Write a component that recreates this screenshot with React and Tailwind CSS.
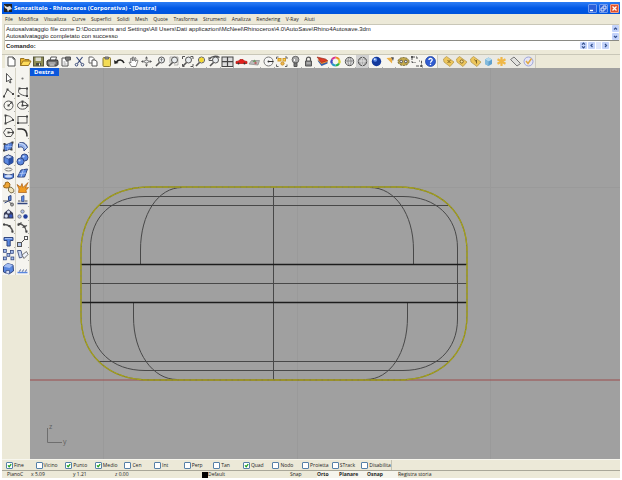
import React from "react";

const K = "#555555";

function Icon({ children }) {
  return (
    <svg viewBox="0.5 0.5 13 13" className="block size-[13px] shrink-0" fill="none" stroke={K} strokeWidth="1">
      {children}
    </svg>
  );
}

function Lens({ children }) {
  return (
    <>
      <circle cx="8" cy="5.5" r="3" fill="#e8ecee" />
      <path d="M6 8 2.5 11.5" strokeWidth="1.6" />
      {children}
    </>
  );
}

const corner = <path d="M12.5 13.5 13.5 12.5" stroke="#999" strokeWidth=".8" />;
const tag = <path d="M2 4.5 5 2 12.500 7.500 8.500 12 2.500 7.500Z" fill="#edc65c" stroke="#b89a50" strokeWidth=".8" />;

const mainTools = [
  ["Nuovo", <path d="M3.500 2.500H8.500L10.500 4.500V11.500H3.500ZM8.500 2.500V4.500H10.500" fill="#fff" />],
  ["Apri", <><path d="M2 11V4H5.500L6.500 5H10.500V7" fill="#e9b32c" stroke="#9a7420" /><path d="M2 11 4.500 6.500H12.500L10 11Z" fill="#ffdc5a" stroke="#9a7420" /></>],
  ["Salva", <><rect x="2" y="2.500" width="10" height="9" fill="#8d8c55" stroke="#55543a" /><path d="M4 3H9.500V6.500H4Z" fill="#dcdcd2" stroke="none" /><path d="M4.500 8.500H9.500V11H4.500Z" fill="#4b4b40" stroke="none" /><path d="M8 9V11" stroke="#fff" /></>],
  ["Stampa", <><path d="M4.500 6 5.500 2.500H11L10 6" fill="#fff" /><path d="M1.500 6.500 3 5.500H12L12.500 7V10L11 11.500H2.500L1.500 10Z" fill="#6c6c6c" stroke="#333" /><path d="M3 8.500H10" stroke="#ddd" /><path d="M4 10.500H9" stroke="#fff" /></>],
  ["Proprietà", <><path d="M3.500 3.500H9.500V11.500H3.500Z" fill="#fff" /><path d="M7 2.500H12V5.500H10L8.500 7 7 5Z" fill="#777" /><path d="M5 7.500H7M5 9.500H8" stroke="#999" /></>],
  ["Taglia", <><path d="M4 2.500 9 9M10 2.500 5 9" stroke="#394a7a" strokeWidth="1.200" /><circle cx="4" cy="10.200" r="1.300" stroke="#394a7a" /><circle cx="10" cy="10.200" r="1.300" stroke="#394a7a" /></>],
  ["Copia", <><path d="M3.500 2.500H7L8.500 4V8.500H3.500Z" fill="#fff" stroke="#666" /><path d="M6.500 5.500H9.500L11.500 7V11.500H6.500Z" fill="#fff" stroke="#555" /></>],
  ["Incolla", <><rect x="3.500" y="3" width="7.500" height="9" rx="1" fill="#f3dc55" stroke="#8b7a33" /><path d="M5.500 2.500H9V4.500H5.500Z" fill="#999" stroke="#666" /></>],
  ["Annulla", <><path d="M4 7.500C6 4.500 10 5 11.500 8.500" strokeWidth="1.600" stroke="#222" /><path d="M1.500 5.500 2 9.500 6 8.500Z" fill="#222" stroke="none" />{corner}</>],
  ["Panoramica", <path d="M5 12 2.500 8 3.500 7.500 4.500 8.500 4 4 5 3.500 6 6.500V2.500H7.200L7.500 6.500 8.500 3 9.500 3.500 9 7 10.500 5.500 11.500 6 9.500 12Z" fill="#fff" stroke="#666" strokeWidth=".8" />],
  ["Ruota vista", <><path d="M7 3V12M2 7H12" stroke="#999" strokeWidth=".8" /><path d="M5.500 4 7 1.800 8.500 4ZM5.500 10 7 12.200 8.500 10ZM3.800 5.500 1.500 7 3.800 8.500ZM10.200 5.500 12.500 7 10.200 8.500Z" fill="#555" stroke="none" /><ellipse cx="7" cy="7" rx="2.200" ry="1.500" fill="#eee" strokeWidth=".8" />{corner}</>],
  ["Zoom dinamico", <Lens><path d="M8 4V7M7 5 8 4 9 5" strokeWidth=".7" /></Lens>],
  ["Zoom finestra", <><Lens /><path d="M3.500 8V2.500H11.500V10.500H7" strokeDasharray="1 1" stroke="#777" />{corner}</>],
  ["Zoom estensioni", <><Lens /><path d="M2 4.500V2H4.500M10 2H12.500V4.500M12.500 9.500V12H10M4 12H2V9.500" />{corner}</>],
  ["Zoom selezione", <><Lens /><circle cx="8" cy="5.500" r="2.400" fill="#f4d82f" stroke="none" />{corner}</>],
  ["Vista precedente", <><Lens /><path d="M2 4.500C4 1.500 9 1 12 3" strokeWidth="1.500" /><path d="M1.500 2.500V6H5" />{corner}</>],
  ["Quattro viste", <><rect x="1.500" y="2.500" width="11" height="9.500" fill="#ddd" stroke="#444" /><path d="M7 2.500V12M1.500 7.200H12.500" stroke="#444" strokeWidth="1.200" />{corner}</>],
  ["Vista destra", <><path d="M1.500 9V7L4 6.500 5.500 5H8.500L10 6.500 12.500 7V9Z" fill="#e3211d" stroke="#b01613" strokeWidth=".7" /><circle cx="4" cy="9" r="1" fill="#333" stroke="none" /><circle cx="10" cy="9" r="1" fill="#333" stroke="none" /></>],
  ["Piano di costruzione", <><path d="M1.500 9.500 4 6H12L10.500 10.500Z" fill="#bbb" stroke="#888" strokeWidth=".7" /><path d="M5 7.500 7 5 9 7.500Z" fill="#6c9b67" stroke="none" /><circle cx="8" cy="8.500" r="1.200" fill="#b66" stroke="none" />{corner}</>],
  ["Centro vista", <><circle cx="7" cy="7" r="4.500" fill="#f6f6f6" stroke="#777" /><path d="M7 7H12" stroke="#333" /><circle cx="7" cy="7" r="1" fill="#333" stroke="none" />{corner}</>],
  ["Seleziona", <><path d="M2 4.500V2.500H4M10.500 2.500H12.500V4.500M12.500 10V12H10.500M4 12H2V10" stroke="#666" /><rect x="3.500" y="4" width="3" height="2.500" fill="#f5c93b" stroke="#d39a2b" /><rect x="8.500" y="4" width="2.500" height="2.500" fill="#f7d75a" stroke="#d39a2b" /><circle cx="8" cy="9" r="1.600" fill="#f2b94a" stroke="#c98f2c" /></>],
  ["Nascondi", <><circle cx="7" cy="5.200" r="3.400" fill="#aaa" stroke="#666" /><path d="M5.500 8.500H8.500V12H5.500Z" fill="#777" stroke="#555" /><path d="M6 4.500V6.500" stroke="#fff" />{corner}</>],
  ["Blocca", <><path d="M5 6.500V4.500C5 2 9 2 9 4.500V6.500" strokeWidth="1.200" /><path d="M4 6.500H10V11.500H4Z" fill="#888" /><path d="M5 8.500H9" stroke="#ccc" />{corner}</>],
  ["Livelli", <><path d="M2 6 6 11.500 12 9V6Z" fill="#355ea8" stroke="none" /><path d="M2 5 6 9.500 12 7.500V5.500Z" fill="#f48b30" stroke="none" /><path d="M1.500 2.500 10 4.500 12 6 6 8Z" fill="#dd3b25" stroke="#8c2418" strokeWidth=".6" />{corner}</>],
  ["Proprietà colore", <g strokeWidth="2.200"><path d="M7 3A4 4 0 0 1 10.500 5" stroke="#ef8b22" /><path d="M10.500 5A4 4 0 0 1 10.500 9" stroke="#d5cf2b" /><path d="M10.500 9A4 4 0 0 1 7 11" stroke="#29b14a" /><path d="M7 11A4 4 0 0 1 3.500 9" stroke="#2599c8" /><path d="M3.500 9A4 4 0 0 1 3.500 5" stroke="#4149c3" /><path d="M3.500 5A4 4 0 0 1 7 3" stroke="#d93191" /></g>],
  ["Wireframe", <><circle cx="7" cy="7" r="4.200" fill="#ddd" stroke="#555" /><path d="M7 3C5 5 5 9 7 11M7 3C9 5 9 9 7 11M3 6.500H11" stroke="#777" strokeWidth=".8" />{corner}</>],
  ["Ombreggia", <><rect x="0.500" y="0.500" width="13" height="13" fill="#d0d0d0" stroke="none" /><circle cx="7" cy="7" r="4.200" fill="#aaa" stroke="#555" /><path d="M7 3C5 5 5 9 7 11M7 3C9 5 9 9 7 11M3 6.500H11" stroke="#eee" strokeWidth=".8" />{corner}</>],
  ["Renderizza", <><circle cx="7" cy="7" r="4.700" fill="#12389c" stroke="none" /><circle cx="5.700" cy="5.300" r="2" fill="#5f8ee8" stroke="none" /><circle cx="5.300" cy="4.800" r=".8" fill="#fff" stroke="none" />{corner}</>],
  ["Faretto", <><path d="M4 3.500 10 3 9.500 9Z" fill="#ecae43" stroke="none" /><path d="M8.500 2.500 11.500 3 10.500 6.500Z" fill="#555" stroke="none" />{corner}</>],
  ["Opzioni", <><ellipse cx="7" cy="7" rx="5.500" ry="4" fill="#c4a94a" stroke="#6d6030" strokeDasharray="2 1" /><circle cx="4.700" cy="7" r="1.300" fill="#eee" /><circle cx="9.300" cy="7" r="1.300" fill="#eee" /></>],
  ["Quota", <><path d="M2.500 2.500V8H6M2.500 2.500H7.500V5M6.500 11.500H12V6.500H9.500" stroke="#555" strokeDasharray="3 1" /><path d="M1.500 1.500H3.500V3.500H1.500ZM11 10.500H13V12.500H11Z" fill="#555" stroke="none" />{corner}</>],
  ["Guida", <><circle cx="7" cy="7" r="5" fill="#2f5cd2" stroke="#173a96" strokeWidth=".7" /><path d="M5.300 5.500C5.500 3.500 8.800 3.500 8.700 5.500 8.600 6.700 7 6.700 7 8.200M7 9.200V10.400" stroke="#fff" strokeWidth="1.300" /></>],
];

const renderTools = [
  ["Materiali", <>{tag}<path d="M6 5.500 9 8.500M9 5.500 6 8.500" stroke="#806626" /></>],
  ["Luci", <>{tag}<circle cx="7.200" cy="7" r="1.600" stroke="#806626" fill="#f6e2a0" /></>],
  ["Camera", <>{tag}<path d="M6 5 8 7.500M8 5.500V9" stroke="#806626" /></>],
  ["Cubo", <><path d="M3.500 5 7 3 10.500 5V9.500L7 11.500 3.500 9.500Z" fill="#5e9fce" stroke="none" /><path d="M3.500 5 7 3 10.500 5 7 7Z" fill="#b4daef" stroke="none" /><path d="M7 7V11.500L3.500 9.500V5Z" fill="#83bbdd" stroke="none" /></>],
  ["Sole", <path d="M7 2.500V11.500M3 4.800 11 9.200M11 4.800 3 9.200" stroke="#f0b848" strokeWidth="2.200" />],
  ["Piano infinito", <path d="M2 5 5.500 2.500 12 9 8.500 11.500Z" fill="#e1e1df" stroke="#777" />],
  ["Conferma", <><circle cx="7" cy="7" r="4.500" fill="#e5e5f7" stroke="#9da4d8" /><path d="M4.500 6.500 6.500 9 10 4" stroke="#e0a944" strokeWidth="1.500" /></>],
];

const B = "#5a88e0";
const N = "#33477f";
function Dots({ at }) {
  return at.map(([x, y]) => <rect key={x + "-" + y} x={x - 1} y={y - 1} width="2" height="2" fill="#444" stroke="none" />);
}

const leftTools = [
  ["Seleziona oggetti", <path d="M5 2V10.500L7 8.500 8.500 11.500 9.500 11 8.300 8H10.500Z" fill="#fff" stroke="#444" strokeWidth=".9" />],
  ["Polilinea", <><path d="M2.500 11 6 4 11.500 8.500" /><Dots at={[[2.500, 11], [6, 4], [11.500, 8.500]]} />{corner}</>],
  ["Cerchio", <><circle cx="7" cy="7" r="4.500" /><path d="M7 7 10 4" /><Dots at={[[7, 7], [10, 4]]} />{corner}</>],
  ["Arco", <><path d="M4 3V11M4 3C8 3 11 5 11.500 7.500L4 11" /><Dots at={[[4, 3], [4, 11], [11.500, 7.500]]} />{corner}</>],
  ["Poligono", <><path d="M4.500 3H9.500L12 7 9.500 11H4.500L2 7Z" /><path d="M7 7H11.500" /><Dots at={[[7, 7], [11.500, 7]]} />{corner}</>],
  ["Superficie da punti", <><path d="M3 4.500C6 6 8 3 11 3L10 10C7 9 5 12 2.500 11Z" fill={B} stroke={N} /><path d="M4.500 7H10.500M7 4.500 6 10.500" stroke="#a6c0f5" strokeWidth=".7" /><Dots at={[[3, 4.500], [11, 3], [10, 10], [2.500, 11]]} />{corner}</>],
  ["Parallelepipedo", <><path d="M2.500 4.500 7 2.500 11.500 4.500V10L7 12.500 2.500 10Z" fill={B} stroke={N} /><path d="M2.500 4.500 7 2.500 11.500 4.500 7 6.500Z" fill="#b9cef9" stroke={N} strokeWidth=".7" /><path d="M7 6.500V12.500L11.500 10V4.500Z" fill="#2950a7" stroke="none" />{corner}</>],
  ["Proietta curva", <><ellipse cx="7" cy="3" rx="3.500" ry="1.500" stroke="#777" /><path d="M2 7C5 9 9 9 12 7V11C9 13 5 13 2 11Z" fill={B} stroke={N} /><ellipse cx="7" cy="9.800" rx="3.500" ry="1.200" fill="#d5e1fa" stroke="none" /></>],
  ["Unione booleana", <><path d="M2 5 3.500 4.500 4 2 6.500 1.500 8.500 3.500 8 6.500 5.500 7.500 2.500 7Z" fill="#efa637" stroke="#9c691c" /><path d="M7 7.500 9.500 6.500 12.300 9V11.500L9.500 12.500 7 10.500Z" fill="#eee3bd" stroke="#807450" />{corner}</>],
  ["Tronca", <><path d="M7 3 9.500 2V7H7Z" fill={B} stroke={N} /><path d="M1.500 7.500H7L11 11.500" /><circle cx="10.500" cy="11" r="1.500" /><path d="M3 9.500 7 7.500" stroke={N} /></>],
  ["Raggruppa", <><path d="M7 1.800 11.500 5.500 12 11H2L2.500 5.500Z" fill="#393d58" stroke="none" /><circle cx="7" cy="4.500" r="1.500" fill="#dbe3f6" stroke="none" /><circle cx="4.700" cy="8.500" r="1.700" fill="#dbe3f6" stroke="none" /><circle cx="9.300" cy="8.500" r="1.700" fill="#3556bd" stroke="none" />{corner}</>],
  ["Modifica punti", <><path d="M2.500 4C7 4 11 7 11 12" strokeWidth="1.500" /><Dots at={[[2.500, 4], [8, 5.500], [11, 11]]} />{corner}</>],
  ["Testo", <><path d="M2.500 3H11.500V6H8.700V11.500H5.500V6H2.500Z" fill={B} stroke={N} /><path d="M3.500 4H10.500" stroke="#b4c9f8" strokeWidth=".8" />{corner}</>],
  ["Serie", <>{[[2, 2], [9, 3], [5.500, 6], [2, 9.500], [9.500, 9.500]].map(([x, y]) => <rect key={x + "/" + y} x={x} y={y} width="2.800" height="2.800" fill="#a9c1f1" stroke={N} strokeWidth=".8" />)}</>],
  ["Analizza solido", <><path d="M2 5 6 2 11.500 3.500 12 9.500 7.500 12.500 2 10.500Z" fill={B} stroke={N} /><path d="M2 5 6 2 11.500 3.500 8 6.500Z" fill="#a4bef3" stroke="none" /><path d="M4.500 12V9H8V12" fill="#d6dff4" stroke={N} strokeWidth=".7" /></>],
];

const rightTools = [
  ["Punto", <circle cx="7" cy="7" r="1.100" fill="#777" stroke="none" />],
  ["Curva per punti", <><path d="M4 3H11.500M4 3C1 7 5 10 11.500 10.500V3" /><Dots at={[[4, 3], [11.500, 3], [3, 10.500], [11.500, 10.500]]} />{corner}</>],
  ["Ellisse", <><ellipse cx="7" cy="7" rx="5" ry="3.700" /><path d="M7 7H12M7 7V3" /><Dots at={[[7, 7], [12, 7], [7, 3]]} />{corner}</>],
  ["Rettangolo", <><rect x="2.500" y="4" width="9" height="6.500" /><Dots at={[[2.500, 10.500], [11.500, 4]]} />{corner}</>],
  ["Raccordo", <><path d="M2 3.500H6C10 3.500 11.500 6 11.500 11" strokeWidth="1.600" stroke="#333" />{corner}</>],
  ["Superficie da curva", <><path d="M3 4C7 1.500 11 4 12 8L8.500 11.500C8.500 8 6 6.500 3 8Z" fill="#92b0eb" stroke={N} /><path d="M3 4C7 3.500 10 6 10.500 9" stroke="#e9effc" strokeWidth=".8" />{corner}</>],
  ["Sfera", <><circle cx="9" cy="5" r="3.500" fill={B} stroke={N} /><circle cx="5" cy="9" r="3.500" fill={B} stroke={N} /><circle cx="8" cy="4" r="1.100" fill="#c7d8fb" stroke="none" /><circle cx="4" cy="8" r="1.100" fill="#c7d8fb" stroke="none" />{corner}</>],
  ["Mesh", <><path d="M2 10.500 5.500 3.500 12 2.500 9 10.500Z" fill={B} stroke={N} /><path d="M4 7 10.500 6.500M8 3 5.500 10.500" stroke="#bdd0f8" strokeWidth=".8" />{corner}</>],
  ["Esplodi", <path d="M3 12 3.500 8.500 1.500 4 5 6.500 6.500 3 7.500 7 12.500 2 10 7.500 13 7 10.500 10 11 12Z" fill="#f09c22" stroke="#a85b16" strokeWidth=".7" />],
  ["Suddividi", <><path d="M2 10H12" stroke={N} strokeWidth="1.500" /><path d="M6 8V3L8.500 2V8Z" fill={B} stroke={N} strokeWidth=".7" /><path d="M2.500 7.500H5M9 7.500H12" />{corner}</>],
  ["Separa gruppo", <><circle cx="7" cy="4" r="1.700" fill="#b3c3ec" stroke="#666" strokeWidth=".7" /><circle cx="4" cy="9" r="1.700" fill="#b3c3ec" stroke="#666" strokeWidth=".7" /><circle cx="10" cy="9" r="2.200" fill="#223e9c" stroke="none" />{corner}</>],
  ["Punti di controllo", <><path d="M3 3C8 4 10 6 11 12M2.500 5 6 2M7 7 11.500 5" strokeWidth="1.300" /><Dots at={[[3, 4], [9, 6], [11, 11]]} />{corner}</>],
  ["Scala", <><path d="M3.500 10.500 10.500 3.500" /><rect x="2" y="8" width="4" height="4" fill="#b6c9ee" /><rect x="9" y="2" width="3" height="3" fill="#fff" />{corner}</>],
  ["Orienta", <><path d="M2 3H5.500L7 9.500 4 10.500Z" fill="#c9d7f4" stroke="#52618d" /><path d="M8.500 11 6.500 7.500 11 4 12.500 7Z" fill="#eef2fb" stroke="#777" />{corner}</>],
  ["Quota verticale", <><path d="M2 11H12" stroke={B} strokeWidth="1.500" /><path d="M4 10 5 8M7 10 8 8M10 10 11 8" stroke={N} strokeWidth=".9" /></>],
];

function Tools({ items, vertical }) {
  return (
    <div role="toolbar" className={vertical ? "flex h-[203px] flex-col" : "flex h-full w-full"}>
      {items.map(([name, art]) => (
        <button key={name} type="button" aria-label={name} className="flex min-h-0 min-w-0 flex-1 items-center justify-center">
          <Icon>{art}</Icon>
        </button>
      ))}
    </div>
  );
}

const menus = ["File", "Modifica", "Visualizza", "Curve", "Superfici", "Solidi", "Mesh", "Quote", "Trasforma", "Strumenti", "Analizza", "Rendering", "V-Ray", "Aiuti"];
const snaps = [["Fine", true], ["Vicino"], ["Punto", true], ["Medio", true], ["Cen"], ["Int"], ["Perp"], ["Tan"], ["Quad", true], ["Nodo"], ["Proietta"], ["STrack"], ["Disabilita"]];

function Scroll({ label, d }) {
  return (
    <button type="button" aria-label={label} className="flex h-[7px] w-[7px] items-center justify-center rounded-[1px] bg-[#c3d3fb]">
      <svg viewBox="0 0 7 7" className="size-[7px]" fill="none" stroke="#34508c" strokeWidth="1.200"><path d={d} /></svg>
    </button>
  );
}

const outline = "M81 252C81 212 108 187 150 187H398C440 187 467 212 467 252V315C467 355 440 380 398 380H150C108 380 81 355 81 315Z";

function Viewport() {
  return (
    <svg viewBox="30 68 590 391" className="block w-full" fill="none">
      <path d="M103.500 68V459M297.500 68V459M490.500 68V459M30 187.500H620" stroke="#9a9a9a" />
      <path d="M30 380H620" stroke="#9c4c4c" />
      <g stroke="#484848">
        <path d="M90.500 248C90.500 217 112 196.500 145 196.500H403C436 196.500 457.500 217 457.500 248V319C457.500 350 436 370.500 403 370.500H145C112 370.500 90.500 350 90.500 319Z" />
        <path d="M99 205.500H448M81 283.500H467M99 361.500H449M273.500 187V380" />
        <path d="M140.500 264V250C140.500 214 158 187.500 182 187.500M413.500 264V250C413.500 214 395 187.500 370 187.500M133.500 303V317C133.500 353 153 379.500 177 379.500M407.500 303V317C407.500 353 390 379.500 366 379.500" />
      </g>
      <path d="M81 264.500H467M81 302.500H467" stroke="#1c1c1c" strokeWidth="1.300" />
      <path d={outline} stroke="#87842a" strokeWidth="1.300" />
      <path d={outline} stroke="#a5a11c" strokeWidth="1.100" strokeDasharray="5 1" />
      <path d="M47.500 428V442.500H62" stroke="#6e6e6e" />
      <text x="49" y="429" fontSize="7" fill="#606060" fontFamily="Open Sans, sans-serif">z</text>
      <text x="63" y="444" fontSize="7" fill="#606060" fontFamily="Open Sans, sans-serif">y</text>
    </svg>
  );
}

export default function App() {
  return (
    <div className="bg-white p-[2px] font-['Open_Sans',sans-serif] text-[5px] leading-[8px] text-[#222]">
      <div className="flex flex-col bg-[#ece9d8]">
        <header className="flex h-3 items-center justify-between bg-linear-to-b from-[#2b7df5] via-[#0058e6] to-[#0054dc] pr-px pl-[2px] text-white">
          <div className="flex items-center gap-[2px]">
            <svg viewBox="0 0 8 8" className="size-2"><path d="M0 0H8V8H0Z" fill="#222" /><path d="M0 1 3 3 6 2 8 5 5 6 4 8 3 5 1 4Z" fill="#ddd" /></svg>
            <h1 className="text-[6px] font-bold whitespace-nowrap">Senzatitolo - Rhinoceros (Corporativa) - [Destra]</h1>
          </div>
          <div className="flex gap-[2px]">
            <button type="button" aria-label="Riduci" className="size-[9px] rounded-[1px] border border-[#6f9cf0] bg-[#2b5fd9]"><svg viewBox="0 0 7 7"><path d="M1 5.500H4" stroke="#fff" strokeWidth="1.400" /></svg></button>
            <button type="button" aria-label="Ripristina" className="size-[9px] rounded-[1px] border border-[#6f9cf0] bg-[#2b5fd9]"><svg viewBox="0 0 7 7" fill="none" stroke="#fff" strokeWidth=".8"><path d="M1 3H4V6H1ZM3 2.500V1H6V4H4.500" /></svg></button>
            <button type="button" aria-label="Chiudi" className="size-[9px] rounded-[1px] border border-[#f0a088] bg-[#e2512c]"><svg viewBox="0 0 7 7"><path d="M1.500 1.500 5.500 5.500M5.500 1.500 1.500 5.500" stroke="#fff" strokeWidth="1.300" /></svg></button>
          </div>
        </header>
        <nav className="ml-[3px] flex h-[10px] w-[310px] items-center justify-between">
          {menus.map((m) => <button key={m} type="button" className="whitespace-nowrap">{m}</button>)}
        </nav>
        <section className="mr-px ml-[2px] border-t border-l border-[#c9c7b8] bg-white font-['Liberation_Sans',sans-serif] text-[6px]">
          <div className="flex h-4 items-center justify-between border-b border-[#8a8a84] pl-px">
            <div className="leading-[7px] whitespace-nowrap">
              <p>Autosalvataggio file come D:\Documents and Settings\All Users\Dati applicazioni\McNeel\Rhinoceros\4.0\AutoSave\Rhino4Autosave.3dm</p>
              <p>Autosalvataggio completato con successo</p>
            </div>
            <div className="flex flex-col gap-px">
              <Scroll label="Scorri su" d="M2 4.500 3.500 3 5 4.500" />
              <Scroll label="Scorri giù" d="M2 3 3.500 4.500 5 3" />
            </div>
          </div>
          <div className="flex h-[9px] items-center pl-px">
            <label htmlFor="cmd" className="font-bold">Comando:</label>
            <input id="cmd" className="h-2 min-w-0 flex-1 bg-transparent outline-none" />
            <div className="flex gap-[1px]">
              <Scroll label="Cronologia" d="M2 2.700 3.500 1.200 5 2.700M2 4.300 3.500 5.800 5 4.300" />
              <Scroll label="Scorri a sinistra" d="M4.500 2 3 3.500 4.500 5" />
              <span className="w-[5px] bg-[#dfe7fc]" />
              <Scroll label="Scorri a destra" d="M3 2 4.500 3.500 3 5" />
            </div>
            <span className="ml-px h-full w-[9px] bg-[#ece9d8]" />
          </div>
        </section>
        <div className="mt-1 flex h-[14px] border-t border-[#c9c7b8] pl-[3px]">
          <div className="w-[432px] bg-[#f5f4ef]"><Tools items={mainTools} /></div>
          <div className="w-[99px] border-x border-[#cfccbd] bg-[#eae9e3] pl-1"><Tools items={renderTools} /></div>
        </div>
        <main className="flex">
          <aside className="w-7 shrink-0">
            <div className="grid grid-cols-2 gap-px bg-[#d6d3c5] pr-px">
              <div className="bg-[#f5f4ef] pt-1"><Tools items={leftTools} vertical /></div>
              <div className="bg-[#f5f4ef] pt-1"><Tools items={rightTools} vertical /></div>
            </div>
          </aside>
          <div className="relative min-w-0 flex-1 bg-[#a0a0a0]">
            <h2 className="absolute top-0 left-0 w-[29px] bg-[#0a57dc] pl-1 text-[6px] leading-[8px] font-bold text-white">Destra</h2>
            <Viewport />
          </div>
        </main>
        <form className="flex h-3 items-center border-t border-b border-t-[#f7f6ee] border-b-[#a9a799] pl-1">
          <div className="flex h-full w-[386px] items-center border-r border-[#c5c2b2]">
            {snaps.map(([s, on]) => (
              <label key={s} className="flex min-w-0 flex-1 items-center gap-px whitespace-nowrap">
                <span className="relative block size-[7px] shrink-0">
                  <input type="checkbox" defaultChecked={!!on} className="peer block size-[7px] appearance-none rounded-[1px] border border-[#5580a8] bg-white" />
                  <svg viewBox="0 0 7 7" className="pointer-events-none absolute inset-0 hidden size-[7px] peer-checked:block" fill="none"><path d="M2 3.300 3.200 4.700 5.200 2.200" stroke="#21a121" strokeWidth="1.300" /></svg>
                </span>
                {s}
              </label>
            ))}
          </div>
        </form>
        <footer className="grid h-[7px] grid-cols-[24px_42px_42px_87px_88px_27px_22px_28px_31px_1fr] overflow-hidden pl-[5px] leading-[7px] whitespace-nowrap">
          <span>PianoC</span>
          <span>x 5.09</span>
          <span>y 1.21</span>
          <span>z 0.00</span>
          <span className="flex items-center"><i className="size-[6px] bg-black" />Default</span>
          <button type="button" className="text-left">Snap</button>
          <button type="button" className="bg-[#f5f4ec] text-left font-bold">Orto</button>
          <button type="button" className="bg-[#f5f4ec] text-left font-bold">Planare</button>
          <button type="button" className="bg-[#f5f4ec] text-left font-bold">Osnap</button>
          <button type="button" className="text-left">Registra storia</button>
        </footer>
      </div>
    </div>
  );
}
